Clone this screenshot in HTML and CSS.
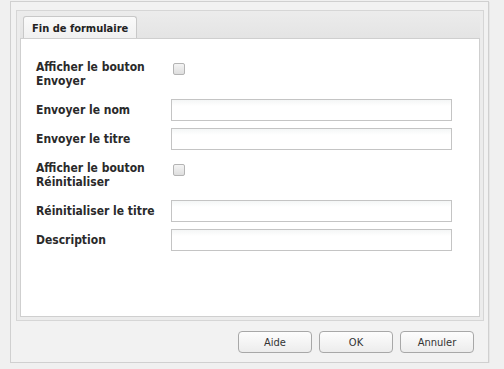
FILE: index.html
```html
<!DOCTYPE html>
<html lang="fr">
<head>
<meta charset="utf-8">
<title>Fin de formulaire</title>
<link rel="stylesheet" href="styles.css">
</head>
<body>
<div class="window">
  <div class="tabpanel">
    <div class="tabstrip">
      <div class="tab">Fin de formulaire</div>
    </div>
    <div class="content">
      <div class="form">
        <div class="row row-check">
          <label class="label">Afficher le bouton<br>Envoyer</label>
          <span class="checkbox"></span>
        </div>
        <div class="row">
          <label class="label">Envoyer le nom</label>
          <span class="input"></span>
        </div>
        <div class="row">
          <label class="label">Envoyer le titre</label>
          <span class="input"></span>
        </div>
        <div class="row row-check">
          <label class="label">Afficher le bouton<br>Réinitialiser</label>
          <span class="checkbox"></span>
        </div>
        <div class="row">
          <label class="label">Réinitialiser le titre</label>
          <span class="input"></span>
        </div>
        <div class="row">
          <label class="label">Description</label>
          <span class="input"></span>
        </div>
      </div>
    </div>
  </div>
  <div class="buttons">
    <button class="btn">Aide</button>
    <button class="btn">OK</button>
    <button class="btn">Annuler</button>
  </div>
</div>
</body>
</html>
```
FILE: styles.css
```css
* { box-sizing: border-box; }
html, body {
  margin: 0;
  padding: 0;
  background: #f0f0f0;
  font-family: "DejaVu Sans Condensed", "DejaVu Sans", sans-serif;
  font-stretch: condensed;
}
.window {
  margin: 1px 0 0 10px;
  width: 479px;
  height: 362px;
  border: 1px solid #d0d0d0;
  background: #f2f2f2;
  display: flex;
  flex-direction: column;
  box-shadow: 1px 1px 0 #e6e6e6;
}
.tabpanel {
  margin: 8px 4px 0 5px;
  height: 311px;
  border: 1px solid #d6d6d6;
  background: #ececec;
  padding: 0 3px 3px 3px;
  display: flex;
  flex-direction: column;
}
.tabstrip {
  height: 27px;
  padding: 4px 0 0 3px;
  display: flex;
  align-items: flex-end;
  background: linear-gradient(#ececec, #e4e4e4);
}
.tab {
  height: 23px;
  width: 114px;
  border: 1px solid #c8c8c8;
  border-bottom: none;
  border-radius: 3px 3px 0 0;
  background: linear-gradient(#fafafa, #f0f0f0);
  font-weight: bold;
  font-size: 11px;
  color: #222;
  padding: 5px 0 0 8px;
  margin-bottom: -1px;
}
.content {
  flex: 1;
  background: #fff;
  border: 1px solid #cfcfcf;
  padding: 17px 0 0 15px;
}
.form {
  display: flex;
  flex-direction: column;
  gap: 7px;
}
.row {
  display: flex;
  align-items: center;
  height: 22px;
}
.row-check {
  height: 36px;
  align-items: flex-start;
  padding-top: 4px;
}
.label {
  width: 135px;
  font-weight: bold;
  font-size: 12px;
  line-height: 14px;
  color: #2a2a2a;
}
.checkbox {
  margin: 3px 0 0 2px;
  width: 12px;
  height: 12px;
  border: 1px solid #b4b4b4;
  border-radius: 2px;
  background: linear-gradient(#f4f4f4, #dedede);
}
.input {
  width: 281px;
  height: 22px;
  border: 1px solid #c4c4c4;
  background: linear-gradient(#f4f6f6, #fff 6px);
}
.buttons {
  display: flex;
  justify-content: flex-end;
  gap: 7px;
  padding: 10px 14px 0 0;
}
.btn {
  width: 74px;
  height: 22px;
  border: 1px solid #a8a8a8;
  border-radius: 4px;
  background: linear-gradient(#fdfdfd, #ececec);
  font-family: inherit;
  font-size: 11px;
  color: #333;
  padding: 0;
}
```
